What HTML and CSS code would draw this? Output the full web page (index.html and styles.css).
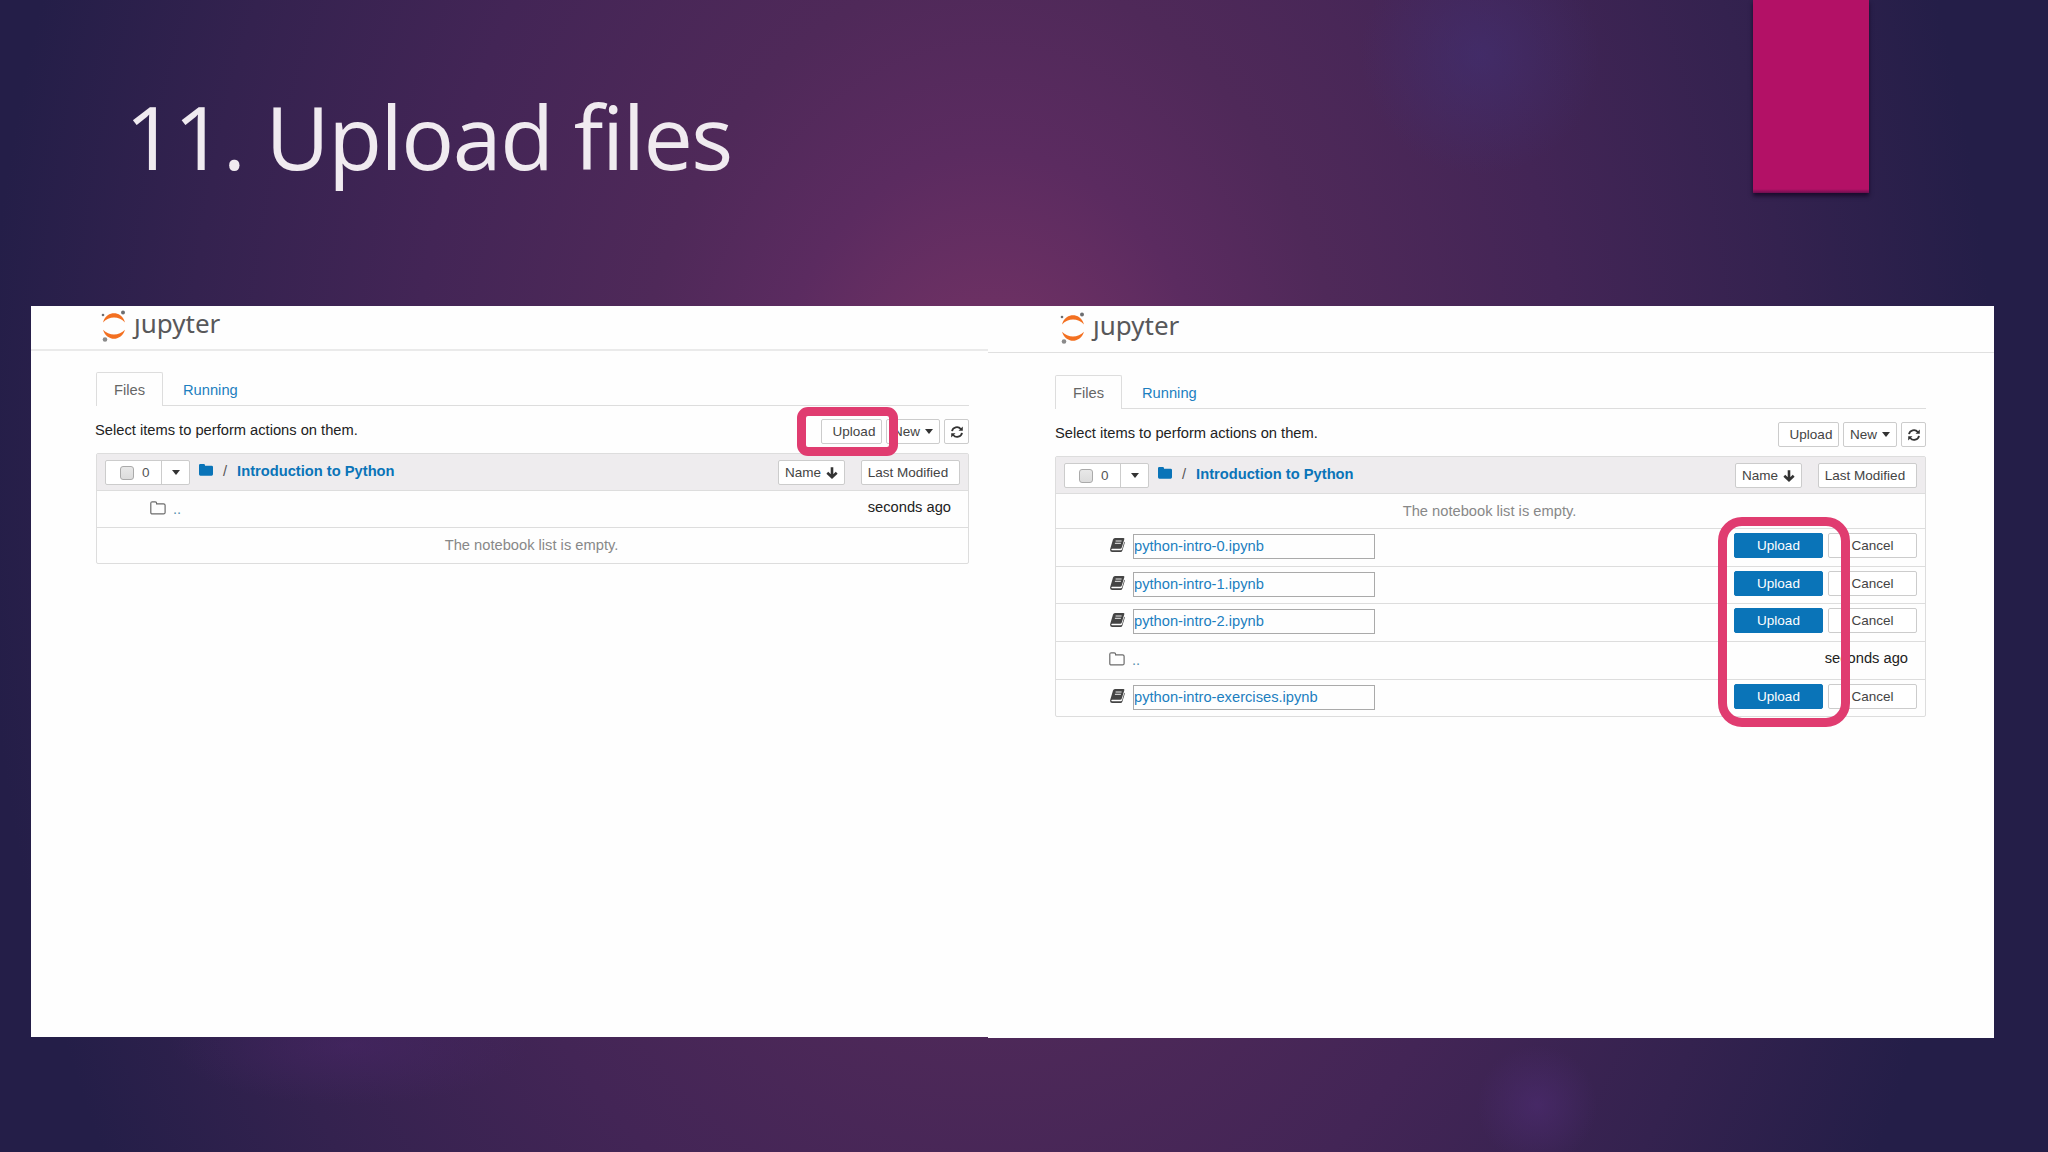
FILE: index.html
```html
<!DOCTYPE html>
<html lang="en">
<head>
    <meta charset="UTF-8">
    <meta name="viewport" content="width=device-width, initial-scale=1.0">
    <title>11. Upload files</title>
    <link rel="stylesheet" href="styles.css">
</head>
<body>
    <!-- Shared icons -->
    <svg class="sprite" aria-hidden="true">
        <symbol id="logo" viewBox="0 0 26 32">
            <path fill="#f37021" d="M2 12.5C4 5.500 9 3.300 13 3.300S22 5.500 24 12.500C21 9 17 7.600 13 7.600S5 9 2 12.500z"/>
            <path fill="#f37021" d="M2 19.800C5 23 9 24.500 13 24.500S21 23 24 19.800C22 26.300 17 28.800 13 28.800S4 26.300 2 19.800z"/>
            <circle cx="22" cy="2.600" r="2" fill="#6d6e71"/>
            <circle cx="2" cy="5" r="1.300" fill="#6d6e71"/>
            <circle cx="4" cy="29.500" r="2.300" fill="#8a8a8a"/>
        </symbol>
        <symbol id="folder" viewBox="0 0 14 12">
            <path fill="#0a74b8" d="M0 1.300Q0 0 1.300 0h3.400Q6 0 6 1.300v.5h6.600q1.400 0 1.400 1.300v7.200q0 1.400-1.400 1.400H1.400Q0 11.700 0 10.300z"/>
        </symbol>
        <symbol id="folder-open" viewBox="0 0 16 14">
            <path fill="none" stroke="#6b6b6b" stroke-width="1.200" d="M.8 2.300Q.8.8 2.300.8h2.900q1.400 0 1.400 1.500v.5h6.900q1.600 0 1.600 1.500v7.100q0 1.500-1.600 1.500H2.400Q.8 12.900.8 11.400z"/>
        </symbol>
        <symbol id="book" viewBox="0 0 15 14">
            <path fill="#444" d="M5 0h8.300q1.400 0 1 1.300l-2.500 8.200q-.4 1.200-1.600 1.200H2.200q-1 0-.9.900t1.300.7h8.200q.9 0 1.200-.8l2.300-7.700q.7.300.4 1.200l-2.300 7.500q-.5 1.500-1.900 1.500H2.200Q-.4 14 .2 11L3 1.600Q3.500 0 5 0z"/>
            <path stroke="#fff" stroke-width=".9" d="M5.600 3h6M4.900 5.300h6"/>
        </symbol>
        <symbol id="refresh" viewBox="0 0 12 12">
            <path fill="none" stroke="#333" stroke-width="1.800" d="M1 5.200A5 5 0 0 1 9.800 3M11 6.800A5 5 0 0 1 2.200 9"/>
            <path fill="#333" d="M11.800.5v4.300H7.500zM.2 11.500V7.200h4.300z"/>
        </symbol>
        <symbol id="arrow" viewBox="0 0 12 12">
            <path fill="none" stroke="#333" stroke-width="2.600" d="M6 .3v10M1.300 5.700L6 10.200l4.700-4.500"/>
        </symbol>
    </svg>

    <div class="ribbon"></div>
    <h1>11. Upload files</h1>

    <div class="shots">
        <!-- Before choosing files -->
        <div class="shot shot-left">
            <div class="header">
                <svg class="logo"><use href="#logo"/></svg>
                <span class="brand"><span class="dotless">j</span>upyter</span>
            </div>
            <div class="content">
                <div class="tabs">
                    <span class="tab active">Files</span>
                    <span class="tab">Running</span>
                </div>
                <div class="toolbar">
                    <span class="hint">Select items to perform actions on them.</span>
                    <span class="btn btn-upload">Upload</span>
                    <span class="btn btn-new">New <i class="caret"></i></span>
                    <span class="btn btn-refresh"><svg><use href="#refresh"/></svg></span>
                </div>
                <div class="list">
                    <div class="list-header">
                        <div class="selector">
                            <span class="count"><i class="checkbox"></i>0</span>
                            <span class="drop"><i class="caret"></i></span>
                        </div>
                        <svg class="home"><use href="#folder"/></svg>
                        <span class="slash">/</span>
                        <span class="crumb">Introduction to Python</span>
                        <span class="btn btn-name">Name <svg><use href="#arrow"/></svg></span>
                        <span class="btn btn-modified">Last Modified</span>
                    </div>
                    <div class="row">
                        <svg class="folder-icon"><use href="#folder-open"/></svg>
                        <span class="up">..</span>
                        <span class="time">seconds ago</span>
                    </div>
                    <div class="row empty">The notebook list is empty.</div>
                </div>
            </div>
            <div class="mark mark-left"></div>
        </div>

        <!-- Files waiting to be uploaded -->
        <div class="shot shot-right">
            <div class="header">
                <svg class="logo"><use href="#logo"/></svg>
                <span class="brand"><span class="dotless">j</span>upyter</span>
            </div>
            <div class="content">
                <div class="tabs">
                    <span class="tab active">Files</span>
                    <span class="tab">Running</span>
                </div>
                <div class="toolbar">
                    <span class="hint">Select items to perform actions on them.</span>
                    <span class="btn btn-upload">Upload</span>
                    <span class="btn btn-new">New <i class="caret"></i></span>
                    <span class="btn btn-refresh"><svg><use href="#refresh"/></svg></span>
                </div>
                <div class="list">
                    <div class="list-header">
                        <div class="selector">
                            <span class="count"><i class="checkbox"></i>0</span>
                            <span class="drop"><i class="caret"></i></span>
                        </div>
                        <svg class="home"><use href="#folder"/></svg>
                        <span class="slash">/</span>
                        <span class="crumb">Introduction to Python</span>
                        <span class="btn btn-name">Name <svg><use href="#arrow"/></svg></span>
                        <span class="btn btn-modified">Last Modified</span>
                    </div>
                    <div class="row empty">The notebook list is empty.</div>
                    <div class="row">
                        <svg class="book-icon"><use href="#book"/></svg>
                        <span class="filename">python-intro-0.ipynb</span>
                        <span class="btn btn-primary">Upload</span>
                        <span class="btn btn-cancel">Cancel</span>
                    </div>
                    <div class="row">
                        <svg class="book-icon"><use href="#book"/></svg>
                        <span class="filename">python-intro-1.ipynb</span>
                        <span class="btn btn-primary">Upload</span>
                        <span class="btn btn-cancel">Cancel</span>
                    </div>
                    <div class="row">
                        <svg class="book-icon"><use href="#book"/></svg>
                        <span class="filename">python-intro-2.ipynb</span>
                        <span class="btn btn-primary">Upload</span>
                        <span class="btn btn-cancel">Cancel</span>
                    </div>
                    <div class="row">
                        <svg class="folder-icon"><use href="#folder-open"/></svg>
                        <span class="up">..</span>
                        <span class="time">seconds ago</span>
                    </div>
                    <div class="row">
                        <svg class="book-icon"><use href="#book"/></svg>
                        <span class="filename">python-intro-exercises.ipynb</span>
                        <span class="btn btn-primary">Upload</span>
                        <span class="btn btn-cancel">Cancel</span>
                    </div>
                </div>
            </div>
            <div class="mark mark-right"></div>
        </div>
    </div>
</body>
</html>
```
FILE: styles.css
```css
* {
    box-sizing: border-box;
    margin: 0;
    padding: 0;
}

body {
    position: relative;
    width: 2048px;
    height: 1152px;
    overflow: hidden;
    font-family: "Liberation Sans", Arial, sans-serif;
    font-size: 14.7px;
    color: #222;
    background:
        radial-gradient(circle at 1480px 55px, rgba(65, 48, 115, 0.6), transparent 120px),
        radial-gradient(circle at 1537px 1105px, rgba(78, 44, 115, 0.6), transparent 60px),
        radial-gradient(ellipse 180px 60px at 350px 1045px, rgba(75, 38, 105, 0.5), transparent),
        radial-gradient(ellipse 1060px 1500px at 990px 480px, #743264 0%, #6b3063 12%, #5b2b60 22%, #4f2959 34%, #432556 55%, #34224f 76%, #241e48 95%);
}

.sprite {
    position: absolute;
    width: 0;
    height: 0;
}

h1 {
    height: 306px;
    padding: 76px 0 0 125px;
    font-family: "Open Sans", "Noto Sans", sans-serif;
    font-size: 88px;
    font-weight: 400;
    letter-spacing: -1.5px;
    line-height: 120px;
    color: #f0ebf0;
    white-space: nowrap;
}

.ribbon {
    position: absolute;
    top: 0;
    left: 1753px;
    width: 116px;
    height: 193px;
    background: linear-gradient(#b31166 189px, #6d0f50);
    box-shadow: 0 3px 4px rgba(20, 5, 35, 0.8);
}

.shots {
    display: flex;
    align-items: flex-start;
    margin-left: 31px;
}

.shot {
    position: relative;
    background: #fefefe;
}

.shot-left {
    width: 957px;
    height: 731px;
    padding-right: 19px;
}

.shot-right {
    width: 1006px;
    height: 732px;
    padding-right: 68px;
}

.header {
    display: flex;
    height: 45px;
    padding: 4px 0 0 70px;
    border-bottom: 2px solid #eaeaea;
}

.shot-left .header {
    margin-right: -19px;
}

.shot-right .header {
    height: 47px;
    margin-right: -68px;
    padding: 6px 0 0 72px;
    border-bottom-width: 1px;
    border-bottom-color: #e0e0e0;
}

.logo {
    width: 26px;
    height: 32px;
}

.brand {
    margin-left: 7px;
    font-family: "Noto Sans", "Open Sans", sans-serif;
    font-size: 26px;
    line-height: 26px;
    color: #58585a;
}

/* hides the dot of the j */
.dotless {
    display: inline-block;
    clip-path: inset(8px -10px -10px -10px);
}

.content {
    padding-left: 65px;
}

.shot-right .content {
    padding-left: 67px;
}

.tabs {
    display: flex;
    height: 34px;
    margin-top: 21px;
    border-bottom: 1px solid #ddd;
}

.shot-right .tabs {
    margin-top: 22px;
}

.tab {
    height: 34px;
    padding: 0 20px;
    line-height: 36px;
    color: #1c7fc0;
}

.tab.active {
    width: 67px;
    padding: 0 0 0 17px;
    line-height: 34px;
    color: #666;
    background: #fefefe;
    border: 1px solid #ddd;
    border-bottom: none;
    border-radius: 2px 2px 0 0;
}

.toolbar {
    display: flex;
    height: 47px;
    padding-top: 13px;
}

.hint {
    flex: 1;
    margin-left: -1px;
    line-height: 22px;
}

.shot-right .hint {
    margin-left: 0;
}

.btn {
    display: flex;
    align-items: center;
    justify-content: center;
    height: 25px;
    font-size: 13.5px;
    color: #444;
    background: #fff;
    border: 1px solid #ccc;
    border-radius: 2px;
}

.btn-upload {
    width: 61px;
    padding-left: 5px;
}

.btn-new {
    width: 54px;
    margin: 0 4px;
    gap: 5px;
}

.btn-refresh {
    width: 25px;
}

.btn svg {
    width: 12px;
    height: 12px;
}

.caret {
    border-top: 5px solid #333;
    border-left: 4.500px solid transparent;
    border-right: 4.500px solid transparent;
}

.list {
    border: 1px solid #ddd;
    border-radius: 2px;
}

.list-header {
    display: flex;
    height: 35.500px;
    padding: 6px 8px 0;
    background: #eeecee;
}

.selector {
    display: flex;
    width: 85px;
    height: 25px;
    background: #fff;
    border: 1px solid #ccc;
    border-radius: 2px;
    color: #555;
}

.count {
    display: flex;
    align-items: center;
    width: 56px;
    padding-left: 14px;
    gap: 8px;
    border-right: 1px solid #ccc;
    font-size: 13.5px;
}

.checkbox {
    width: 14px;
    height: 14px;
    border: 1px solid #aaa;
    border-radius: 3px;
    background: linear-gradient(#e8e8e8, #dcdcdc);
}

.drop {
    display: flex;
    flex: 1;
    align-items: center;
    justify-content: center;
}

.home {
    width: 14px;
    height: 12px;
    margin: 4px 0 0 9px;
}

.slash {
    margin-left: 10px;
    line-height: 22px;
    color: #555;
}

.crumb {
    flex: 1;
    margin-left: 10px;
    line-height: 22px;
    font-weight: bold;
    color: #0a74b8;
}

.btn-name {
    width: 67px;
    margin-right: 16px;
    gap: 5px;
}

.btn-modified {
    width: 99px;
    padding-right: 5px;
}

.row {
    display: flex;
    height: 37.67px;
    padding: 4px 8px 0 53px;
    border-top: 1px solid #ddd;
}

.row.empty {
    height: 35.500px;
    padding: 0 2px 0 0;
    justify-content: center;
    line-height: 34px;
    color: #888;
}

.folder-icon {
    width: 16px;
    height: 14px;
    margin-top: 6px;
}

.up {
    flex: 1;
    margin-left: 7px;
    line-height: 29px;
    color: #5a8fae;
}

.time {
    padding-right: 9px;
    line-height: 25px;
}

.book-icon {
    width: 15px;
    height: 14px;
    margin: 5px 0 0 1px;
}

.filename {
    width: 242px;
    height: 25px;
    margin: 1px auto 0 8px;
    border: 1px solid #aaa;
    line-height: 23px;
    color: #1c7fc0;
}

.btn-primary {
    width: 89px;
    margin-right: 5px;
    color: #fff;
    background: #0a74b8;
    border-color: #0a74b8;
}

.btn-cancel {
    width: 89px;
}

/* callout frames over the buttons */
.mark {
    position: absolute;
    z-index: 2;
    border: 9.500px solid #e03c70;
}

.mark-left {
    top: 101px;
    left: 766px;
    width: 101px;
    height: 49px;
    border-radius: 11px;
}

.mark-right {
    top: 211px;
    left: 730px;
    width: 132px;
    height: 210px;
    border-radius: 24px;
}
```
